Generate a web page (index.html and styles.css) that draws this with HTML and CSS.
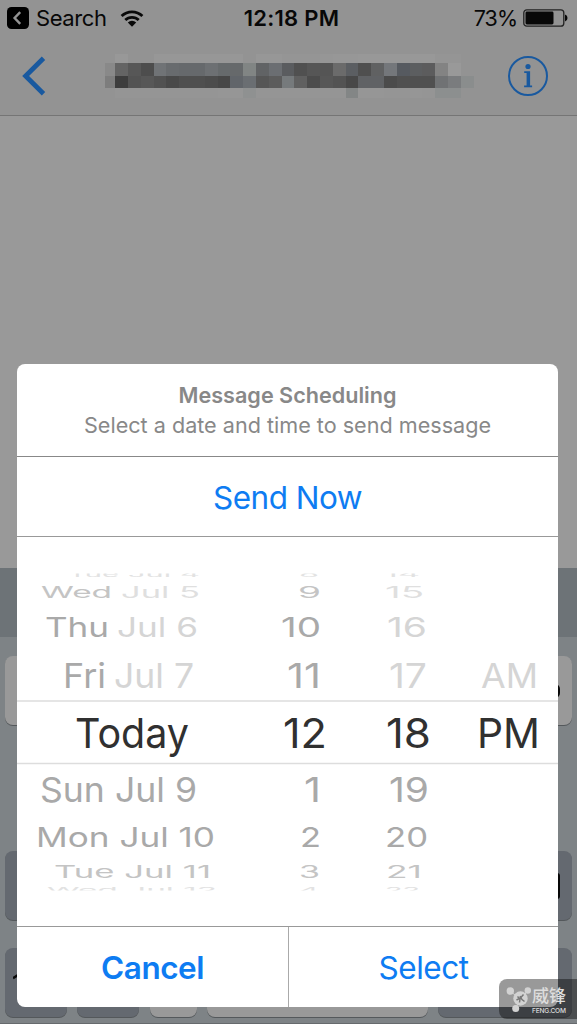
FILE: index.html
```html
<!DOCTYPE html>
<html lang="en">
<head>
<meta charset="utf-8">
<title>Message Scheduling</title>
<link rel="stylesheet" href="styles.css">
</head>
<body>
<div class="phone">
  <header class="top">
    <div class="status">
      <div class="status-left">
        <svg class="back-app" viewBox="0 0 22 22"><rect width="22" height="22" rx="4.5"/><path d="M13.2 5.2 7.6 11l5.6 5.8"/></svg>
        <span class="search">Search</span>
        <svg class="wifi" viewBox="0 0 24 17"><path d="M1.6 6.1a15 15 0 0 1 20.8 0M5.3 10a9.6 9.6 0 0 1 13.4 0"/><path class="dot" d="M7.8 12.4a6 6 0 0 1 8.4 0L12 16.7z"/></svg>
      </div>
      <span class="clock">12:18 PM</span>
      <div class="status-right">
        <span class="percent">73%</span>
        <svg class="battery" viewBox="0 0 45 18"><rect x=".8" y=".8" width="40" height="16.4" rx="3"/><rect class="fill" x="2.5" y="2.5" width="28" height="13" rx="1.4"/><path class="fill" d="M42 5.5q2.5.7 2.5 3.5T42 12.5z"/></svg>
      </div>
    </div>
    <div class="nav">
      <svg class="chevron" viewBox="0 0 24 40"><path d="M21.5 2.2 3.6 20 21.5 37.8"/></svg>
      <svg class="contact" viewBox="105 54 370 45" id="contact"></svg>
      <svg class="info" viewBox="0 0 42 42"><circle cx="21" cy="21" r="19"/><circle class="solid" cx="21" cy="11.5" r="2.6"/><path class="solid" d="M17.2 16.3h5.9v14.3h2v1.6h-8v-1.6h2.5V18h-2.4z"/></svg>
    </div>
  </header>
  <main class="thread"></main>
  <div class="suggestions"></div>
  <div class="keyboard">
    <div class="key light wide"><i class="glyph-a"></i></div>
    <div class="key dark wide low"><i class="glyph-b"></i></div>
    <div class="keys-bottom">
      <div class="key dark"><svg class="one" viewBox="0 0 8 8"><path d="M0 5.2 5 2"/></svg></div>
      <div class="key dark"></div>
      <div class="key light"></div>
      <div class="key light"></div>
      <div class="key dark"></div>
    </div>
  </div>

  <section class="sheet">
    <div class="head">
      <div class="title">Message Scheduling</div>
      <div class="subtitle">Select a date and time to send message</div>
    </div>
    <div class="send"><span>Send Now</span></div>
    <div class="picker">
      <svg class="wheel" viewBox="17 537 541 389">
        <defs><clipPath id="drum"><rect x="17" y="573.5" width="541" height="317"/></clipPath></defs>
        <path class="rule" d="M17 701h541M17 763.5h541"/>
        <g clip-path="url(#drum)">
          <g transform="translate(0 577) scale(1 .18)" class="faint">
            <text x="68" textLength="51" lengthAdjust="spacingAndGlyphs">Tue</text>
            <text x="128" textLength="72" lengthAdjust="spacingAndGlyphs">Jul 4</text>
            <text x="299" textLength="20" lengthAdjust="spacingAndGlyphs">8</text>
            <text x="384" textLength="36" lengthAdjust="spacingAndGlyphs">14</text>
          </g>
          <g transform="translate(0 598.2) scale(1 .39)">
            <text class="mid3" x="41" textLength="71" lengthAdjust="spacingAndGlyphs">Wed</text>
            <text class="pale3" x="121" textLength="79" lengthAdjust="spacingAndGlyphs">Jul 5</text>
            <text class="mid3" x="298" textLength="23" lengthAdjust="spacingAndGlyphs">9</text>
            <text class="pale3" x="385" textLength="39" lengthAdjust="spacingAndGlyphs">15</text>
          </g>
          <g transform="translate(0 636.5) scale(1 .65)">
            <text class="mid" x="45" textLength="64" lengthAdjust="spacingAndGlyphs">Thu</text>
            <text class="pale" x="117" textLength="81" lengthAdjust="spacingAndGlyphs">Jul 6</text>
            <text class="mid" x="281" textLength="40" lengthAdjust="spacingAndGlyphs">10</text>
            <text class="pale" x="387" textLength="40" lengthAdjust="spacingAndGlyphs">16</text>
          </g>
          <g transform="translate(0 688) scale(1 .82)">
            <text class="mid" x="63" textLength="43" lengthAdjust="spacingAndGlyphs">Fri</text>
            <text class="pale" x="114" textLength="80" lengthAdjust="spacingAndGlyphs">Jul 7</text>
            <text class="mid" x="287" textLength="34" lengthAdjust="spacingAndGlyphs">11</text>
            <text class="pale" x="389" textLength="38" lengthAdjust="spacingAndGlyphs">17</text>
            <text class="pale" x="481" textLength="57" lengthAdjust="spacingAndGlyphs">AM</text>
          </g>
          <g transform="translate(0 747.5)" class="now">
            <text x="75" textLength="114" lengthAdjust="spacingAndGlyphs">Today</text>
            <text x="283" textLength="44" lengthAdjust="spacingAndGlyphs">12</text>
            <text x="386" textLength="45" lengthAdjust="spacingAndGlyphs">18</text>
            <text x="477" textLength="63" lengthAdjust="spacingAndGlyphs">PM</text>
          </g>
          <g transform="translate(0 801.5) scale(1 .82)" class="mid">
            <text x="40" textLength="157" lengthAdjust="spacingAndGlyphs">Sun Jul 9</text>
            <text x="304" textLength="17" lengthAdjust="spacingAndGlyphs">1</text>
            <text x="389" textLength="40" lengthAdjust="spacingAndGlyphs">19</text>
          </g>
          <g transform="translate(0 847) scale(1 .65)" class="mid">
            <text x="36" textLength="179" lengthAdjust="spacingAndGlyphs">Mon Jul 10</text>
            <text x="300" textLength="21" lengthAdjust="spacingAndGlyphs">2</text>
            <text x="385" textLength="43" lengthAdjust="spacingAndGlyphs">20</text>
          </g>
          <g transform="translate(0 878) scale(1 .4)" class="mid3">
            <text x="54" textLength="157" lengthAdjust="spacingAndGlyphs">Tue Jul 11</text>
            <text x="299" textLength="21" lengthAdjust="spacingAndGlyphs">3</text>
            <text x="386" textLength="36" lengthAdjust="spacingAndGlyphs">21</text>
          </g>
          <g transform="translate(0 893) scale(1 .19)" class="faint">
            <text x="47" textLength="170" lengthAdjust="spacingAndGlyphs">Wed Jul 12</text>
            <text x="299" textLength="20" lengthAdjust="spacingAndGlyphs">4</text>
            <text x="385" textLength="35" lengthAdjust="spacingAndGlyphs">22</text>
          </g>
        </g>
      </svg>
    </div>
    <div class="actions">
      <div class="cancel"><span>Cancel</span></div>
      <div class="select"><span>Select</span></div>
    </div>
  </section>

  <div class="watermark">
    <svg class="mark" viewBox="0 0 26 26"><circle cx="4.3" cy="4" r="3.7"/><circle cx="21.8" cy="3.5" r="3.2"/><circle cx="9.7" cy="21.5" r="3.5"/><circle cx="14.5" cy="11.5" r="7.2"/><path d="M4 4l5 4M22 4l-4 4M10 21l2-5"/><path class="cut" d="M10.5 13l4-2 3-3.5M14 9l2 3.5 2.5 2M11.5 9.5l2.5 2.5-.5 3.5"/></svg>
    <div class="brand"><span class="cn">威锋</span><span class="site">FENG.COM</span></div>
  </div>
</div>
<script src="app.js"></script>
</body>
</html>
```

FILE: app.js
```js
// Pixelated contact name: each row is a band of square blocks.
const rows = [
  { y: 54, h: 9, c: '- 989898 - - 979797 979797 979797 979797 979797 979797 979797 - 979797 979797 959595 959595 959595 969696 979797 979797 989898 989898 989898 989898 989898 989898 959595 959595 -' },
  { y: 63, h: 13, c: '898989 646464 575757 4d4d4d 707376 686b6e 66696c 66696c 6d7073 666a6c 66696b 818584 616365 6b6e72 5a5c5f 505050 565656 555555 6b6b6b 5b5e62 4f4f4f 606162 74777b 565a60 5c5e60 5c5c5d 838383 999999 -' },
  { y: 76, h: 12, c: '7d7d7d 3d3d3d 535353 575757 515151 494949 4f4f4f 4f4f4f 4c4c4c 474747 61656a 6a6e72 565656 5c5c5c 767a7c 606060 4c4c4c 575757 535353 484848 606265 606265 4b4b4b 505050 505050 505050 707274 7a7c7e 8a8d8d' },
  { y: 88, h: 10, c: '- 959595 959595 959595 959595 959595 959595 959595 959595 969696 969696 8f9191 959595 959595 959595 959595 959595 959595 959595 838686 969696 969696 959595 959595 969696 959595 8c8f8f 8c8f8f -' }
];
const svg = document.getElementById('contact');
rows.forEach(({ y, h, c }) => c.split(' ').forEach((color, i) => {
  if (color === '-') return;
  const x = i === 0 ? 105 : Math.round(115.2 + 12.8 * (i - 1));
  const r = document.createElementNS('http://www.w3.org/2000/svg', 'rect');
  r.setAttribute('x', x);
  r.setAttribute('y', y);
  r.setAttribute('width', Math.round(115.2 + 12.8 * i) - x);
  r.setAttribute('height', h);
  r.setAttribute('fill', '#' + color);
  svg.appendChild(r);
}));
```

FILE: styles.css
```css
* { box-sizing: border-box; }
body { margin: 0; background: #999; font-family: Inter, "Liberation Sans", sans-serif; }
svg { display: block; flex: none; }
.phone { position: relative; width: 577px; height: 1024px; overflow: hidden; display: flex; flex-direction: column; }

.top { height: 116px; background: #939393; border-bottom: 1px solid #757575; }
.status { height: 37px; display: grid; grid-template-columns: 1fr auto 1fr; align-items: center; padding: 0 9px 0 7px; font-size: 22px; line-height: 26px; color: #080808; }
.status-left, .status-right { display: flex; align-items: center; }
.status-right { justify-content: flex-end; }
.search, .clock, .percent { padding-bottom: 1px; }
.back-app { width: 22px; height: 22px; margin-bottom: 1px; }
.back-app path { fill: none; stroke: #939393; stroke-width: 2.4; }
.search { margin-left: 7px; width: 84px; letter-spacing: -.4px; }
.wifi { width: 24px; height: 17px; margin-bottom: 1px; }
.wifi path { fill: none; stroke: #080808; stroke-width: 2.8; }
.wifi .dot { fill: #080808; stroke: none; }
.clock { font-weight: 600; letter-spacing: .25px; padding-left: 8px; }
.percent { margin-right: 6px; font-size: 21.5px; letter-spacing: -1px; }
.battery { width: 45px; height: 18px; margin-bottom: 1px; }
.battery rect { fill: none; stroke: #222; stroke-width: 1.3; }
.battery .fill { fill: #080808; stroke: none; }
.nav { height: 78px; display: flex; align-items: center; padding: 0 28px 0 22px; }
.chevron { width: 24px; height: 40px; fill: none; stroke: #19599f; stroke-width: 4.8; }
.contact { width: 370px; height: 45px; margin-left: 59px; shape-rendering: crispEdges; }
.info { width: 42px; height: 42px; margin-left: 32px; fill: none; stroke: #19599f; stroke-width: 2; }
.info .solid { fill: #19599f; stroke: none; }

.thread { height: 452px; background: #999; }
.suggestions { height: 69px; background: #6d7377; }
.keyboard { height: 387px; background: #7e8386; padding: 19px 5px 0; border-bottom: 1px solid #666a6d; }
.key { height: 69px; border-radius: 8px; box-shadow: 0 1px 0 #54585b; }
.key.light { background: #999; }
.key.dark { background: #646970; }
.wide { display: flex; align-items: center; justify-content: flex-end; overflow: hidden; padding-right: 12px; }
.low { margin-top: 126px; }
.glyph-a { width: 10px; height: 14px; border-radius: 5px; background: #080808; }
.glyph-b { width: 12px; height: 26px; border-radius: 3px; background: #080808; }
.keys-bottom { margin-top: 28px; display: grid; grid-template-columns: 62px 62px 47px 221px 134px; gap: 10.3px; }
.keys-bottom .key { height: 69px; }
.one { width: 8px; height: 8px; margin: 25px 0 0 8px; stroke: #080808; stroke-width: 2.5; }

.sheet { position: absolute; left: 17px; top: 364px; width: 541px; height: 643px; background: #fff; border-radius: 8px; overflow: hidden; display: flex; flex-direction: column; text-align: center; }
.sheet > div { flex: none; }
.head { height: 93px; padding-top: 16px; border-bottom: 1px solid #888; color: #888; font-size: 21.6px; line-height: 30px; }
.title { font-weight: 600; }
.send { height: 80px; border-bottom: 1px solid #999; color: #0e7cf2; font-size: 31.5px; letter-spacing: -.55px; line-height: 82px; }
.picker { height: 389px; }
.wheel { width: 541px; height: 389px; font-size: 41.5px; }
.rule { stroke: #ddd; stroke-width: 1.4; }
.now { fill: #303030; }
.mid { fill: #a9a9a9; }
.pale { fill: #d5d5d5; }
.mid3 { fill: #c4c4c4; }
.pale3 { fill: #dfdfdf; }
.faint { fill: #e2e2e2; }
.actions { height: 81px; display: grid; grid-template-columns: 272px 1fr; border-top: 1px solid #999; color: #0e7cf2; font-size: 31.5px; letter-spacing: -.5px; line-height: 82px; }
.cancel { border-right: 1px solid #aaa; font-weight: 600; }

.watermark { position: absolute; left: 499px; top: 979px; width: 78px; height: 40px; border-radius: 8px 0 0 8px; background: rgba(0, 0, 0, .4); display: flex; padding: 4px 0 0 7px; color: #ddd; }
.mark { width: 26px; height: 26px; margin-top: 4px; fill: #d2d2d2; stroke: #d2d2d2; stroke-width: 1; }
.mark circle { stroke: none; }
.mark .cut { fill: none; stroke: #777; stroke-width: 1.5; }
.brand { display: flex; flex-direction: column; text-align: left; }
.cn { font: 500 17px/24px "Noto Sans CJK SC", sans-serif; }
.site { font-size: 6.6px; line-height: 8px; font-weight: 500; letter-spacing: -.2px; }
```
